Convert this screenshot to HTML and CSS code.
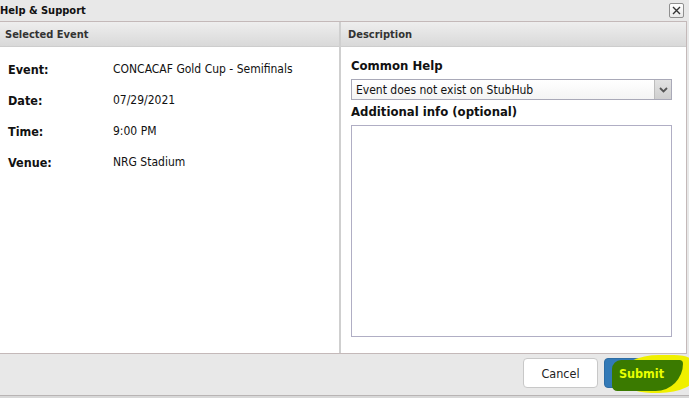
FILE: index.html
```html
<!DOCTYPE html>
<html lang="en">
<head>
<meta charset="UTF-8">
<meta name="viewport" content="width=device-width, initial-scale=1.0">
<title>Help &amp; Support</title>
<link rel="stylesheet" href="styles.css">
</head>
<body>
<div class="dialog">
    <div class="titlebar">
        <span class="title">Help &amp; Support</span>
        <button class="close" aria-label="Close">
            <svg width="9" height="9" viewBox="0 0 9 9"><path d="M1 1L8 8M8 1L1 8" stroke="#333" stroke-width="1.4"/></svg>
        </button>
    </div>
    <div class="content">
        <div class="panel left">
            <div class="panel-head">Selected Event</div>
            <div class="details">
                <div class="row"><span class="label">Event:</span><span class="value">CONCACAF Gold Cup - Semifinals</span></div>
                <div class="row"><span class="label">Date:</span><span class="value">07/29/2021</span></div>
                <div class="row"><span class="label">Time:</span><span class="value">9:00 PM</span></div>
                <div class="row"><span class="label">Venue:</span><span class="value">NRG Stadium</span></div>
            </div>
        </div>
        <div class="panel right">
            <div class="panel-head">Description</div>
            <div class="form">
                <label class="field-label">Common Help</label>
                <div class="select">
                    <span>Event does not exist on StubHub</span>
                    <span class="arrow">
                        <svg width="9" height="6" viewBox="0 0 9 6"><path d="M1 1L4.5 4.5L8 1" stroke="#555" stroke-width="1.8" fill="none"/></svg>
                    </span>
                </div>
                <label class="field-label">Additional info (optional)</label>
                <textarea class="info"></textarea>
            </div>
        </div>
    </div>
    <div class="footer">
        <button class="btn cancel">Cancel</button>
        <button class="btn submit">
            <span class="mark"></span>
            <span class="mark-core"></span>
            <span class="submit-text">Submit</span>
        </button>
    </div>
</div>
</body>
</html>
```

FILE: styles.css
```css
body {
    margin: 0;
    background-color: #d8d8d8;
    font-family: 'DejaVu Sans Condensed', 'DejaVu Sans', sans-serif;
    font-size: 12px;
    color: #111;
}
.dialog {
    width: 689px;
    height: 396px;
    background-color: #e8e8e8;
    border-bottom: 1px solid #b8b4b4;
    box-sizing: border-box;
    display: flex;
    flex-direction: column;
}
.titlebar {
    height: 21px;
    display: flex;
    align-items: center;
    justify-content: space-between;
    padding-right: 5px;
    flex-shrink: 0;
}
.title {
    font-weight: bold;
    font-size: 11px;
    color: #111;
}
.close {
    width: 15px;
    height: 15px;
    padding: 0;
    display: flex;
    align-items: center;
    justify-content: center;
    background: linear-gradient(#ffffff, #e9e9e9);
    border: 1px solid #8f8f8f;
    border-radius: 2px;
}
.content {
    height: 331px;
    display: flex;
    border: 1px solid #c4b9b9;
    border-left: none;
    margin-right: 2px;
    background-color: #fff;
    flex-shrink: 0;
}
.panel {
    display: flex;
    flex-direction: column;
}
.panel.left {
    width: 339px;
    border-right: 2px solid #cfcfcf;
}
.panel.right {
    flex: 1;
}
.panel-head {
    height: 24px;
    line-height: 26px;
    padding-left: 5px;
    font-weight: bold;
    font-size: 11px;
    color: #333;
    background: linear-gradient(#eeeeee, #d9d9d9);
    border-bottom: 1px solid #cdcdcd;
}
.right .panel-head {
    padding-left: 7px;
}
.details {
    padding: 15px 0 0 8px;
}
.row {
    display: flex;
    height: 31px;
    align-items: flex-start;
}
.label {
    width: 105px;
    font-weight: bold;
    font-size: 12.5px;
}
.value {
    font-size: 12px;
}
.form {
    display: flex;
    flex-direction: column;
    padding: 11px 14px 0 10px;
}
.field-label {
    font-weight: bold;
    font-size: 13px;
    color: #111;
    margin-bottom: 6px;
}
.select {
    height: 19px;
    border: 1px solid #a9a9b8;
    display: flex;
    align-items: center;
    justify-content: space-between;
    padding-left: 4px;
    font-size: 12px;
    margin-bottom: 4px;
    background: linear-gradient(#ffffff, #f4f4f4);
}
.arrow {
    width: 16px;
    height: 19px;
    display: flex;
    align-items: center;
    justify-content: center;
    background: linear-gradient(#e2e2e2, #cfcfcf);
    border-left: 1px solid #bdbdbd;
}
.info {
    height: 212px;
    margin: 0;
    border: 1px solid #b0aec4;
    resize: none;
    font-family: inherit;
    box-sizing: border-box;
}
.footer {
    flex: 1;
    display: flex;
    justify-content: flex-end;
    align-items: center;
    gap: 6px;
    padding-right: 10px;
    padding-bottom: 3px;
}
.btn {
    width: 75px;
    height: 30px;
    border-radius: 4px;
    font-family: inherit;
    font-size: 12.5px;
}
.cancel {
    background-color: #fff;
    border: 1px solid #c8c8c8;
    color: #222;
}
.submit {
    position: relative;
    background-color: #337ab7;
    border: 1px solid #2e6da4;
    color: #e8ff00;
    font-weight: bold;
    overflow: visible;
}
.mark {
    position: absolute;
    left: 16px;
    top: -4px;
    width: 76px;
    height: 38px;
    background-color: #f0f000;
    border-radius: 50% 30% 50% 40%;
}
.mark-core {
    position: absolute;
    left: 7px;
    top: 1px;
    width: 71px;
    height: 31px;
    background-color: #3a7a00;
    border-radius: 10px 4px 30px 6px;
}
.submit-text {
    position: relative;
}
```
